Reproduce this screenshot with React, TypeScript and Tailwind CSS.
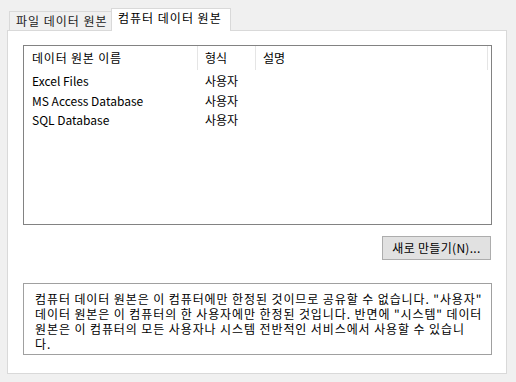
const font = { fontFamily: '"Noto Sans CJK KR", "Noto Sans", sans-serif' }

const rows = [
  { name: 'Excel Files', type: '사용자' },
  { name: 'MS Access Database', type: '사용자' },
  { name: 'SQL Database', type: '사용자' },
]

export default function App() {
  return (
    <div
      className="w-[516px] h-[382px] bg-[#f0f0f0] pt-[8px] pl-[7px] text-[12px] text-black overflow-hidden"
      style={font}
    >
      {/* tab strip */}
      <div className="flex items-end h-[22px] pl-[2px]">
        <div className="h-[19px] w-[103px] border border-b-0 border-[#d9d9d9] bg-[#f0f0f0] pl-[6px] leading-[18px] tracking-[1px] text-[#1a1a1a] whitespace-nowrap">
          파일 데이터 원본
        </div>
        <div className="relative z-10 -ml-px -mb-px h-[23px] w-[120px] border border-b-0 border-[#d9d9d9] bg-white pl-[6px] leading-[18px] tracking-[1px] whitespace-nowrap">
          컴퓨터 데이터 원본
        </div>
      </div>

      {/* tab page */}
      <div className="w-[500px] h-[344px] border border-[#d9d9d9] bg-white pt-[14px] pl-[15px]">
        <div className="w-[469px] h-[180px] border border-[#828282] bg-white">
          <div className="flex h-[24px] leading-[24px]">
            <div className="w-[174px] pl-[8px] border-r border-[#e5e5e5] tracking-[0.8px]">데이터 원본 이름</div>
            <div className="w-[58px] pl-[7px] border-r border-[#e5e5e5]">형식</div>
            <div className="w-[232px] pl-[7px] border-r border-[#e5e5e5]">설명</div>
          </div>
          <div className="pt-[1px]">
            {rows.map(r => (
              <div key={r.name} className="flex h-[19.5px] leading-[19px]">
                <div className="w-[174px] pl-[8px]">{r.name}</div>
                <div className="w-[58px] pl-[7px]">{r.type}</div>
              </div>
            ))}
          </div>
        </div>

        <div className="flex justify-end w-[468px] mt-[11px]">
          <button className="w-[109px] h-[24px] border border-[#adadad] bg-[#e1e1e1] text-[12px] leading-[20px] tracking-[0.3px]">
            새로 만들기(N)...
          </button>
        </div>

        <div className="mt-[23px] w-[469px] h-[72px] border border-[#a0a0a0] bg-white pl-[11px] pt-[7px] leading-[15px] tracking-[0.9px] whitespace-nowrap">
          컴퓨터 데이터 원본은 이 컴퓨터에만 한정된 것이므로 공유할 수 없습니다. "사용자"
          <br />
          데이터 원본은 이 컴퓨터의 한 사용자에만 한정된 것입니다. 반면에 "시스템" 데이터
          <br />
          원본은 이 컴퓨터의 모든 사용자나 시스템 전반적인 서비스에서 사용할 수 있습니
          <br />
          다.
        </div>
      </div>
    </div>
  )
}
